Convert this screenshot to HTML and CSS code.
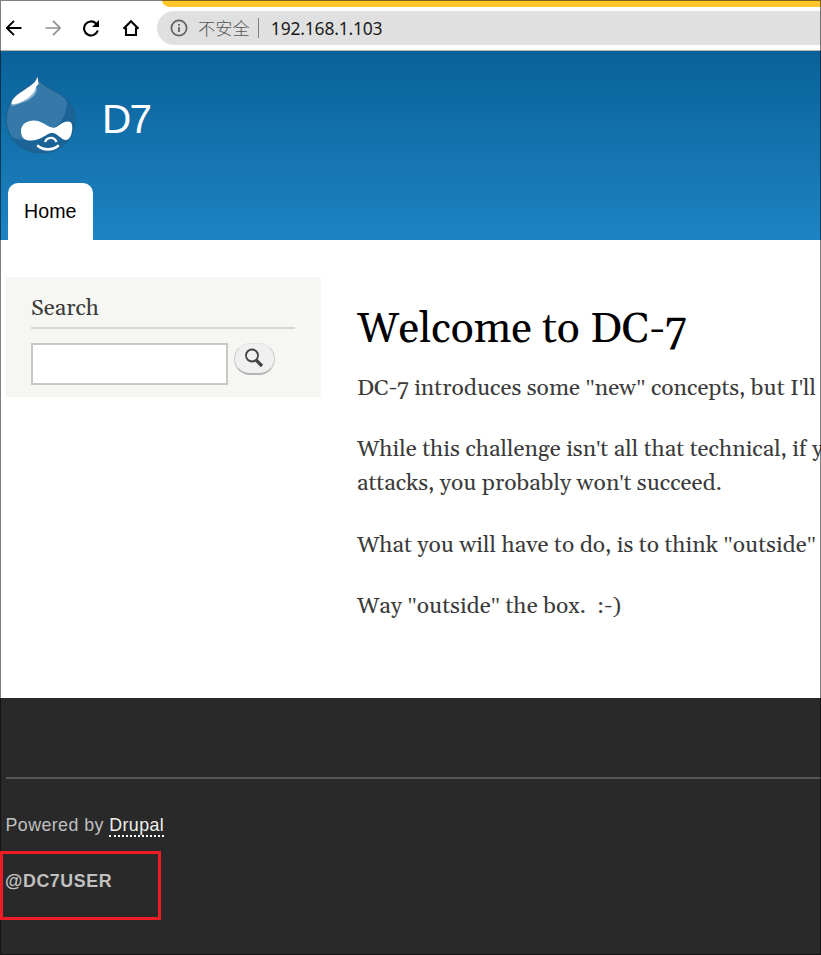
FILE: index.html
```html
<!DOCTYPE html>
<html lang="en">
<head>
<meta charset="utf-8">
<title>Welcome to DC-7 | D7</title>
<link rel="stylesheet" href="styles.css">
</head>
<body>
<div class="window">
  <div class="browser-bar">
    <div class="tab-strip"></div>
    <div class="toolbar">
      <div class="nav-icons">
        <svg viewBox="0 0 16 16" width="16" height="16"><path d="M15.5 8H1M8 .8L.9 8 8 15.200" fill="none" stroke="#000" stroke-width="1.900"/></svg>
        <svg viewBox="0 0 16 16" width="16" height="16"><path d="M.5 8H15M8 .8L15.100 8 8 15.200" fill="none" stroke="#909090" stroke-width="1.700"/></svg>
        <svg viewBox="0 0 18 18" width="18" height="18"><path d="M15.800 11.500A7 7 0 1 1 14 4.400" fill="none" stroke="#000" stroke-width="2.100"/><path d="M17 1V8H10z" fill="#000"/></svg>
        <svg viewBox="0 0 18 18" width="18" height="18"><path d="M1.500 9.800L9 2.300l7.500 7.500M4 8.500V16h10V8.500" fill="none" stroke="#000" stroke-width="2.100"/></svg>
      </div>
      <div class="address">
        <svg viewBox="0 0 18 18" width="18" height="18"><circle cx="9" cy="9" r="7.600" fill="none" stroke="#616161" stroke-width="1.700"/><path d="M9 8v5M9 5v1.800" stroke="#616161" stroke-width="1.800"/></svg>
        <span class="warning">不安全</span>
        <span class="divider"></span>
        <span class="url">192.168.1.103</span>
      </div>
    </div>
  </div>
  <header class="site-header">
    <div class="branding">
      <svg class="logo" viewBox="0 0 72 82" width="72" height="82">
        <path d="M33.500 3.500C35.500 11 43 14 52 19C65 26 70.700 36 70.700 47C70.700 67 56 80 37 80C18 80 2.500 66 2.500 47C2.500 32 9 24 20 16C27 11 33 9 33.500 3.500Z" fill="#1c6498"/>
        <path d="M33.500 3.500C35.500 11 43 14 52 19C57 22 60 24 62.500 27C65 42 53 58 35 64C24 68 10 68 5.500 61C3.500 57 2.500 52 2.500 47C2.500 32 9 24 20 16C27 11 33 9 33.500 3.500Z" fill="#3479a8"/>
        <path d="M33.500 3.500C35.500 11 43 14 52 19C65 26 70.700 36 70.700 47C70.700 67 56 80 37 80C18 80 2.500 66 2.500 47C2.500 32 9 24 20 16C27 11 33 9 33.500 3.500Z" fill="none" stroke="#205a80" stroke-width=".8"/>
        <path d="M32 14C35 18 29 26 20 29C14 31 10 33 7 33C16 24 27 22 32 14Z" fill="#8fb5d0"/>
        <path d="M33.500 3.500C32 10 26 13 19 18C11 23 7 27 7.500 31.500C16 31 27 25 31 17C32 14 33 12 34.700 11C34 9 34 7 33.500 3.500Z" fill="#fff"/>
        <path d="M34 48C27 46 17 49 17 58C17 65 21 68 28 67.500C37 67 42 61 47 60C53 59 57 67 62 67C67 67 69 57 68 52C67 46 59 49 54 53C48 58 43 51 34 48Z" fill="#fff"/>
        <path d="M41 69C43 64 50 63 52.500 69" fill="none" stroke="#fff" stroke-width="2.200"/>
        <path d="M34 73C39 77.500 49 77.500 54 73" fill="none" stroke="#fff" stroke-width="2.600" stroke-linecap="round"/>
      </svg>
      <span class="site-name">D7</span>
    </div>
    <nav><a class="tab">Home</a></nav>
  </header>
  <main class="main">
    <aside class="search-block">
      <h2>Search</h2>
      <form class="search-form">
        <input type="text" aria-label="Search">
        <button type="button" aria-label="Search">
          <svg viewBox="0 0 20 20" width="20" height="20"><circle cx="8" cy="7.500" r="6" fill="none" stroke="#434343" stroke-width="1.800"/><path d="M11.700 11.700L18 18" stroke="#434343" stroke-width="3.300"/></svg>
        </button>
      </form>
    </aside>
    <article class="content">
      <h1>Welcome to DC-7</h1>
      <p>DC-7 introduces some <span class="mark">"</span>new<span class="mark">"</span> concepts, but I<span class="mark">'</span>ll</p>
      <p>While this challenge isn<span class="mark">'</span>t all that technical, if y<br>attacks, you probably won<span class="mark">'</span>t succeed.</p>
      <p>What you will have to do, is to think <span class="mark">"</span>outside<span class="mark">"</span></p>
      <p>Way <span class="mark">"</span>outside<span class="mark">"</span> the box.&nbsp; :-)</p>
    </article>
  </main>
  <footer class="footer">
    <div class="credits">
      <p>Powered by <a>Drupal</a></p>
      <div class="marked"><strong>@DC7USER</strong></div>
    </div>
  </footer>
  <div class="frame"></div>
</div>
</body>
</html>
```
FILE: styles.css
```css
* { box-sizing: border-box; }
body { margin: 0; overflow: hidden; }
.window { position: relative; width: 821px; height: 955px; overflow: hidden; background: #fff; font-family: "Liberation Sans", sans-serif; }
.frame { position: absolute; inset: 0; border: 1px solid rgba(0, 0, 0, .5); pointer-events: none; }
svg { display: block; flex: none; }

.browser-bar { height: 51px; border-bottom: 1px solid #b8b4b0; }
.tab-strip { height: 7px; margin-left: 162px; background: #ffc529; border-bottom-left-radius: 8px 7px; }
.toolbar { display: flex; height: 43px; padding-top: 4px; }
.nav-icons { display: flex; align-items: center; gap: 21.500px; width: 157px; height: 34px; padding-left: 6px; }
.nav-icons svg:first-child { margin-right: 1px; }
.address { display: flex; align-items: center; flex: 1; height: 34px; padding-left: 13px; background: #e0e0e0; border-radius: 17px 0 0 17px; }
.warning { margin-left: 10px; font: 300 17.300px/34px "Noto Sans CJK SC", sans-serif; color: #555; }
.divider { width: 1px; height: 20px; margin: 0 12px 0 8px; background: #808080; }
.url { font: 17.500px/34px "Noto Sans", sans-serif; color: #1c1c1c; letter-spacing: -.2px; }

.site-header { display: flex; flex-direction: column; justify-content: space-between; height: 189px; padding: 22px 0 0 4px; background: linear-gradient(#0a6199, #1d84c3); }
.branding { display: flex; }
.site-name { margin-left: 26px; font-size: 40.500px; line-height: 46px; margin-top: 23px; color: #fffeff; letter-spacing: -1.800px; }
.tab { display: block; width: 84.500px; height: 57px; margin-left: 4px; background: #fff; border-radius: 10px 10px 0 0; font-size: 19.600px; line-height: 57px; text-align: center; color: #000; }

.main { display: flex; height: 458px; font-family: Georgia, Gelasio, "Liberation Serif", serif; color: #3b3b3b; }
.search-block { width: 315px; height: 120px; margin: 36.500px 36px 0 6px; padding: 16.400px 26px 0 25px; background: #f6f6f2; flex: none; }
.search-block h2 { height: 36px; margin: 0 0 14px; border-bottom: 2px solid #d6d6d6; font-weight: 400; font-size: 22.700px; line-height: 32px; }
.search-form { display: flex; gap: 6px; align-items: flex-start; }
.search-form input { width: 197px; height: 42px; border: 2px solid #c8c8c8; background: #fff; }
.search-form button { display: grid; place-items: center; width: 41px; height: 32px; padding: 0 2px 1px 0; border: 1px solid #ccc; border-top-color: #e4e4e4; border-bottom: 2px solid #b4b4b4; border-radius: 16px; background: #f0f0f0; }
.content { width: 600px; flex: none; padding-top: 61px; white-space: nowrap; font-size: 22.800px; line-height: 34px; }
.content h1 { margin: 0 0 14px; font-weight: 400; font-size: 42.600px; line-height: 57px; color: #000; }
.content p { margin: 0 0 27.300px; }
.mark { font-family: "Liberation Serif", serif; line-height: 1; }

.footer { height: 257px; padding: 79px 0 0 6px; background: #292929; color: #c0c0c0; }
.credits { border-top: 2px solid #555; font-size: 17.800px; line-height: 26px; }
.credits p { margin: 33px 0 13px -.5px; letter-spacing: .44px; }
.credits a { display: inline-block; line-height: 20px; color: #f0f0f0; border-bottom: 2px dotted #fcfcfc; }
.marked { position: relative; z-index: 1; width: 161px; height: 69px; margin-left: -6px; padding: 14px 0 0 2px; border: 3px solid #ee1c25; letter-spacing: .6px; }
```
